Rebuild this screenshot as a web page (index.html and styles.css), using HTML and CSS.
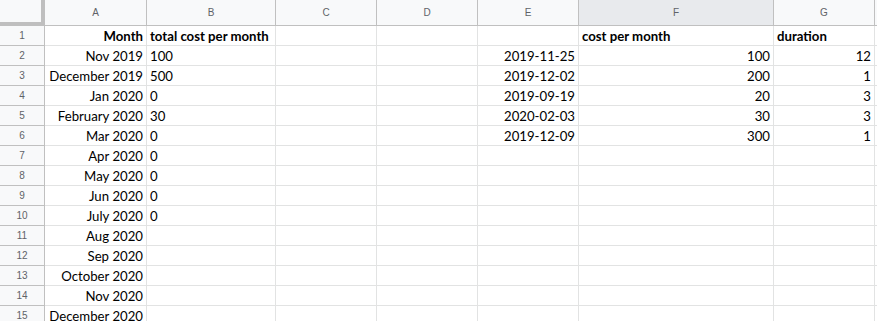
FILE: index.html
```html
<!DOCTYPE html>
<html lang="en">
<head>
    <meta charset="UTF-8">
    <title>Sheet</title>
    <link rel="stylesheet" href="styles.css">
</head>
<body>
<div class="sheet">
    <!-- column headers -->
    <div class="corner"></div>
    <div class="colhead">A</div>
    <div class="colhead">B</div>
    <div class="colhead">C</div>
    <div class="colhead">D</div>
    <div class="colhead">E</div>
    <div class="colhead sel">F</div>
    <div class="colhead">G</div>
    <div class="colhead"></div>

    <div class="rowhead">1</div>
    <div class="cell right bold">Month</div>
    <div class="cell bold">total cost per month</div>
    <div class="cell"></div>
    <div class="cell"></div>
    <div class="cell"></div>
    <div class="cell bold">cost per month</div>
    <div class="cell bold">duration</div>
    <div class="cell"></div>

    <div class="rowhead">2</div>
    <div class="cell right">Nov 2019</div>
    <div class="cell">100</div>
    <div class="cell"></div>
    <div class="cell"></div>
    <div class="cell right">2019-11-25</div>
    <div class="cell right">100</div>
    <div class="cell right">12</div>
    <div class="cell"></div>

    <div class="rowhead">3</div>
    <div class="cell right">December 2019</div>
    <div class="cell">500</div>
    <div class="cell"></div>
    <div class="cell"></div>
    <div class="cell right">2019-12-02</div>
    <div class="cell right">200</div>
    <div class="cell right">1</div>
    <div class="cell"></div>

    <div class="rowhead">4</div>
    <div class="cell right">Jan 2020</div>
    <div class="cell">0</div>
    <div class="cell"></div>
    <div class="cell"></div>
    <div class="cell right">2019-09-19</div>
    <div class="cell right">20</div>
    <div class="cell right">3</div>
    <div class="cell"></div>

    <div class="rowhead">5</div>
    <div class="cell right">February 2020</div>
    <div class="cell">30</div>
    <div class="cell"></div>
    <div class="cell"></div>
    <div class="cell right">2020-02-03</div>
    <div class="cell right">30</div>
    <div class="cell right">3</div>
    <div class="cell"></div>

    <div class="rowhead">6</div>
    <div class="cell right">Mar 2020</div>
    <div class="cell">0</div>
    <div class="cell"></div>
    <div class="cell"></div>
    <div class="cell right">2019-12-09</div>
    <div class="cell right">300</div>
    <div class="cell right">1</div>
    <div class="cell"></div>

    <div class="rowhead">7</div>
    <div class="cell right">Apr 2020</div>
    <div class="cell">0</div>
    <div class="cell"></div><div class="cell"></div><div class="cell"></div><div class="cell"></div><div class="cell"></div><div class="cell"></div>

    <div class="rowhead">8</div>
    <div class="cell right">May 2020</div>
    <div class="cell">0</div>
    <div class="cell"></div><div class="cell"></div><div class="cell"></div><div class="cell"></div><div class="cell"></div><div class="cell"></div>

    <div class="rowhead">9</div>
    <div class="cell right">Jun 2020</div>
    <div class="cell">0</div>
    <div class="cell"></div><div class="cell"></div><div class="cell"></div><div class="cell"></div><div class="cell"></div><div class="cell"></div>

    <div class="rowhead">10</div>
    <div class="cell right">July 2020</div>
    <div class="cell">0</div>
    <div class="cell"></div><div class="cell"></div><div class="cell"></div><div class="cell"></div><div class="cell"></div><div class="cell"></div>

    <div class="rowhead">11</div>
    <div class="cell right">Aug 2020</div>
    <div class="cell"></div>
    <div class="cell"></div><div class="cell"></div><div class="cell"></div><div class="cell"></div><div class="cell"></div><div class="cell"></div>

    <div class="rowhead">12</div>
    <div class="cell right">Sep 2020</div>
    <div class="cell"></div>
    <div class="cell"></div><div class="cell"></div><div class="cell"></div><div class="cell"></div><div class="cell"></div><div class="cell"></div>

    <div class="rowhead">13</div>
    <div class="cell right">October 2020</div>
    <div class="cell"></div>
    <div class="cell"></div><div class="cell"></div><div class="cell"></div><div class="cell"></div><div class="cell"></div><div class="cell"></div>

    <div class="rowhead">14</div>
    <div class="cell right">Nov 2020</div>
    <div class="cell"></div>
    <div class="cell"></div><div class="cell"></div><div class="cell"></div><div class="cell"></div><div class="cell"></div><div class="cell"></div>

    <div class="rowhead">15</div>
    <div class="cell right">December 2020</div>
    <div class="cell"></div>
    <div class="cell"></div><div class="cell"></div><div class="cell"></div><div class="cell"></div><div class="cell"></div><div class="cell"></div>
</div>
</body>
</html>
```

FILE: styles.css
```css
body {
    margin: 0;
    overflow: hidden;
    background: #fff;
    font-family: Lato, "Open Sans", sans-serif;
    color: #000;
}
.sheet {
    display: grid;
    grid-template-columns: 45px 102px 129px 101px 101px 101px 195px 101px 100px;
    grid-template-rows: 26px repeat(15, 20px);
    width: 975px;
}
.sheet > div {
    box-sizing: border-box;
    border-right: 1px solid #e2e3e3;
    border-bottom: 1px solid #e2e3e3;
    white-space: nowrap;
    overflow: hidden;
}
.corner {
    background: #f8f9fa;
    border-right: 4px solid #bfbfbf !important; /* freeze handles */
    border-bottom: 4px solid #bfbfbf !important;
}
.colhead {
    background: #f8f9fa;
    border-right-color: #c0c0c0 !important;
    border-bottom-color: #c0c0c0 !important;
    font-family: "Liberation Sans", Arial, sans-serif;
    font-size: 10px;
    color: #5f6368;
    display: flex;
    align-items: center;
    justify-content: center;
}
.colhead.sel {
    background: #e8eaed;
}
.rowhead {
    background: #f8f9fa;
    border-right-color: #c0c0c0 !important;
    border-bottom-color: #c0c0c0 !important;
    font-family: "Liberation Sans", Arial, sans-serif;
    font-size: 10px;
    color: #5f6368;
    display: flex;
    align-items: center;
    justify-content: center;
}
.cell {
    font-size: 13.2px;
    line-height: 16px;
    padding: 0 3px 1px;
    display: flex;
    align-items: flex-end;
}
.right {
    justify-content: flex-end;
}
.bold {
    font-weight: bold;
}
```
